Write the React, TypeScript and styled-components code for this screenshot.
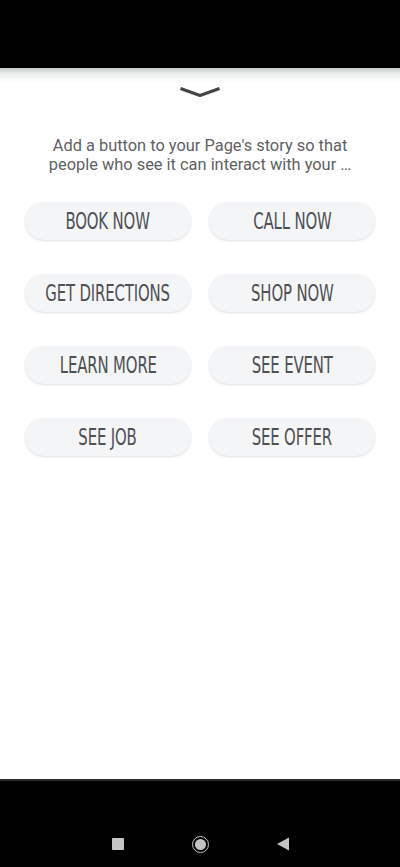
import styled, { createGlobalStyle } from "styled-components";

const GlobalStyle = createGlobalStyle`
  html, body {
    margin: 0;
    padding: 0;
    background: #000;
  }
  body {
    font-family: Roboto, "Liberation Sans", sans-serif;
  }
`;

const Screen = styled.div`
  width: 400px;
  height: 867px;
  display: flex;
  flex-direction: column;
  background: #000;
  overflow: hidden;
`;

const StatusBar = styled.div`
  height: 68px;
  background: #000;
  flex-shrink: 0;
`;

const Sheet = styled.div`
  flex: 1;
  display: flex;
  flex-direction: column;
  align-items: center;
  background: linear-gradient(to bottom, #c3cbc8 0px, #e6ebe9 5px, #fff 14px);
`;

const Handle = styled.div`
  margin-top: 16px;
  height: 16px;
  display: flex;
  align-items: center;
`;

const Blurb = styled.p`
  margin: 36px 0 0;
  width: 330px;
  text-align: center;
  font-size: 16.4px;
  line-height: 19px;
  color: #5f6163;
`;

const ButtonGrid = styled.div`
  margin-top: 28px;
  width: 350px;
  display: grid;
  grid-template-columns: 166px 166px;
  column-gap: 18px;
  row-gap: 34px;
`;

const ActionButton = styled.button`
  height: 38px;
  border: none;
  border-radius: 19px;
  background: #f4f5f7;
  box-shadow: 0 1px 2px rgba(0, 0, 0, 0.12), 0 0 1px rgba(0, 0, 0, 0.06);
  display: flex;
  align-items: center;
  justify-content: center;
  padding: 0;
  cursor: pointer;
`;

const ButtonLabel = styled.span`
  font-family: "DejaVu Sans Condensed", "DejaVu Sans", sans-serif;
  font-stretch: condensed;
  font-size: 23px;
  line-height: 1;
  color: #4e5054;
  display: inline-block;
  white-space: nowrap;
  transform: scaleX(0.72);
  letter-spacing: -0.2px;
`;

const NavBar = styled.div`
  height: 88px;
  flex-shrink: 0;
  border-top: 2px solid #2a2a2a;
  background: #000;
  display: flex;
  align-items: center;
  justify-content: center;
  gap: 68px;
  padding-top: 40px;
  box-sizing: border-box;
`;

const NavSquare = styled.div`
  width: 12px;
  height: 12px;
  background: #c4c4c4;
  border-radius: 1px;
`;

const NavCircle = styled.div`
  width: 15px;
  height: 15px;
  border: 1.5px solid #c4c4c4;
  border-radius: 50%;
  display: flex;
  align-items: center;
  justify-content: center;

  &::after {
    content: "";
    width: 11px;
    height: 11px;
    border-radius: 50%;
    background: #c4c4c4;
  }
`;

const labels = [
  "BOOK NOW",
  "CALL NOW",
  "GET DIRECTIONS",
  "SHOP NOW",
  "LEARN MORE",
  "SEE EVENT",
  "SEE JOB",
  "SEE OFFER",
];

export default function App() {
  return (
    <>
      <GlobalStyle />
      <Screen>
        <StatusBar />
        <Sheet>
          <Handle>
            <svg width="42" height="12" viewBox="0 0 42 12">
              <path
                d="M1.5 2.5 L21 9.5 L40.5 2.5"
                fill="none"
                stroke="#444"
                strokeWidth="3"
                strokeLinejoin="round"
              />
            </svg>
          </Handle>
          <Blurb>
            Add a button to your Page's story so that people who see it can
            interact with your …
          </Blurb>
          <ButtonGrid>
            {labels.map(label => (
              <ActionButton key={label}>
                <ButtonLabel>{label}</ButtonLabel>
              </ActionButton>
            ))}
          </ButtonGrid>
        </Sheet>
        <NavBar>
          <NavSquare />
          <NavCircle />
          <svg width="12" height="14" viewBox="0 0 12 14">
            <path d="M0 7 L12 0.5 L12 13.5 Z" fill="#c4c4c4" />
          </svg>
        </NavBar>
      </Screen>
    </>
  );
}
